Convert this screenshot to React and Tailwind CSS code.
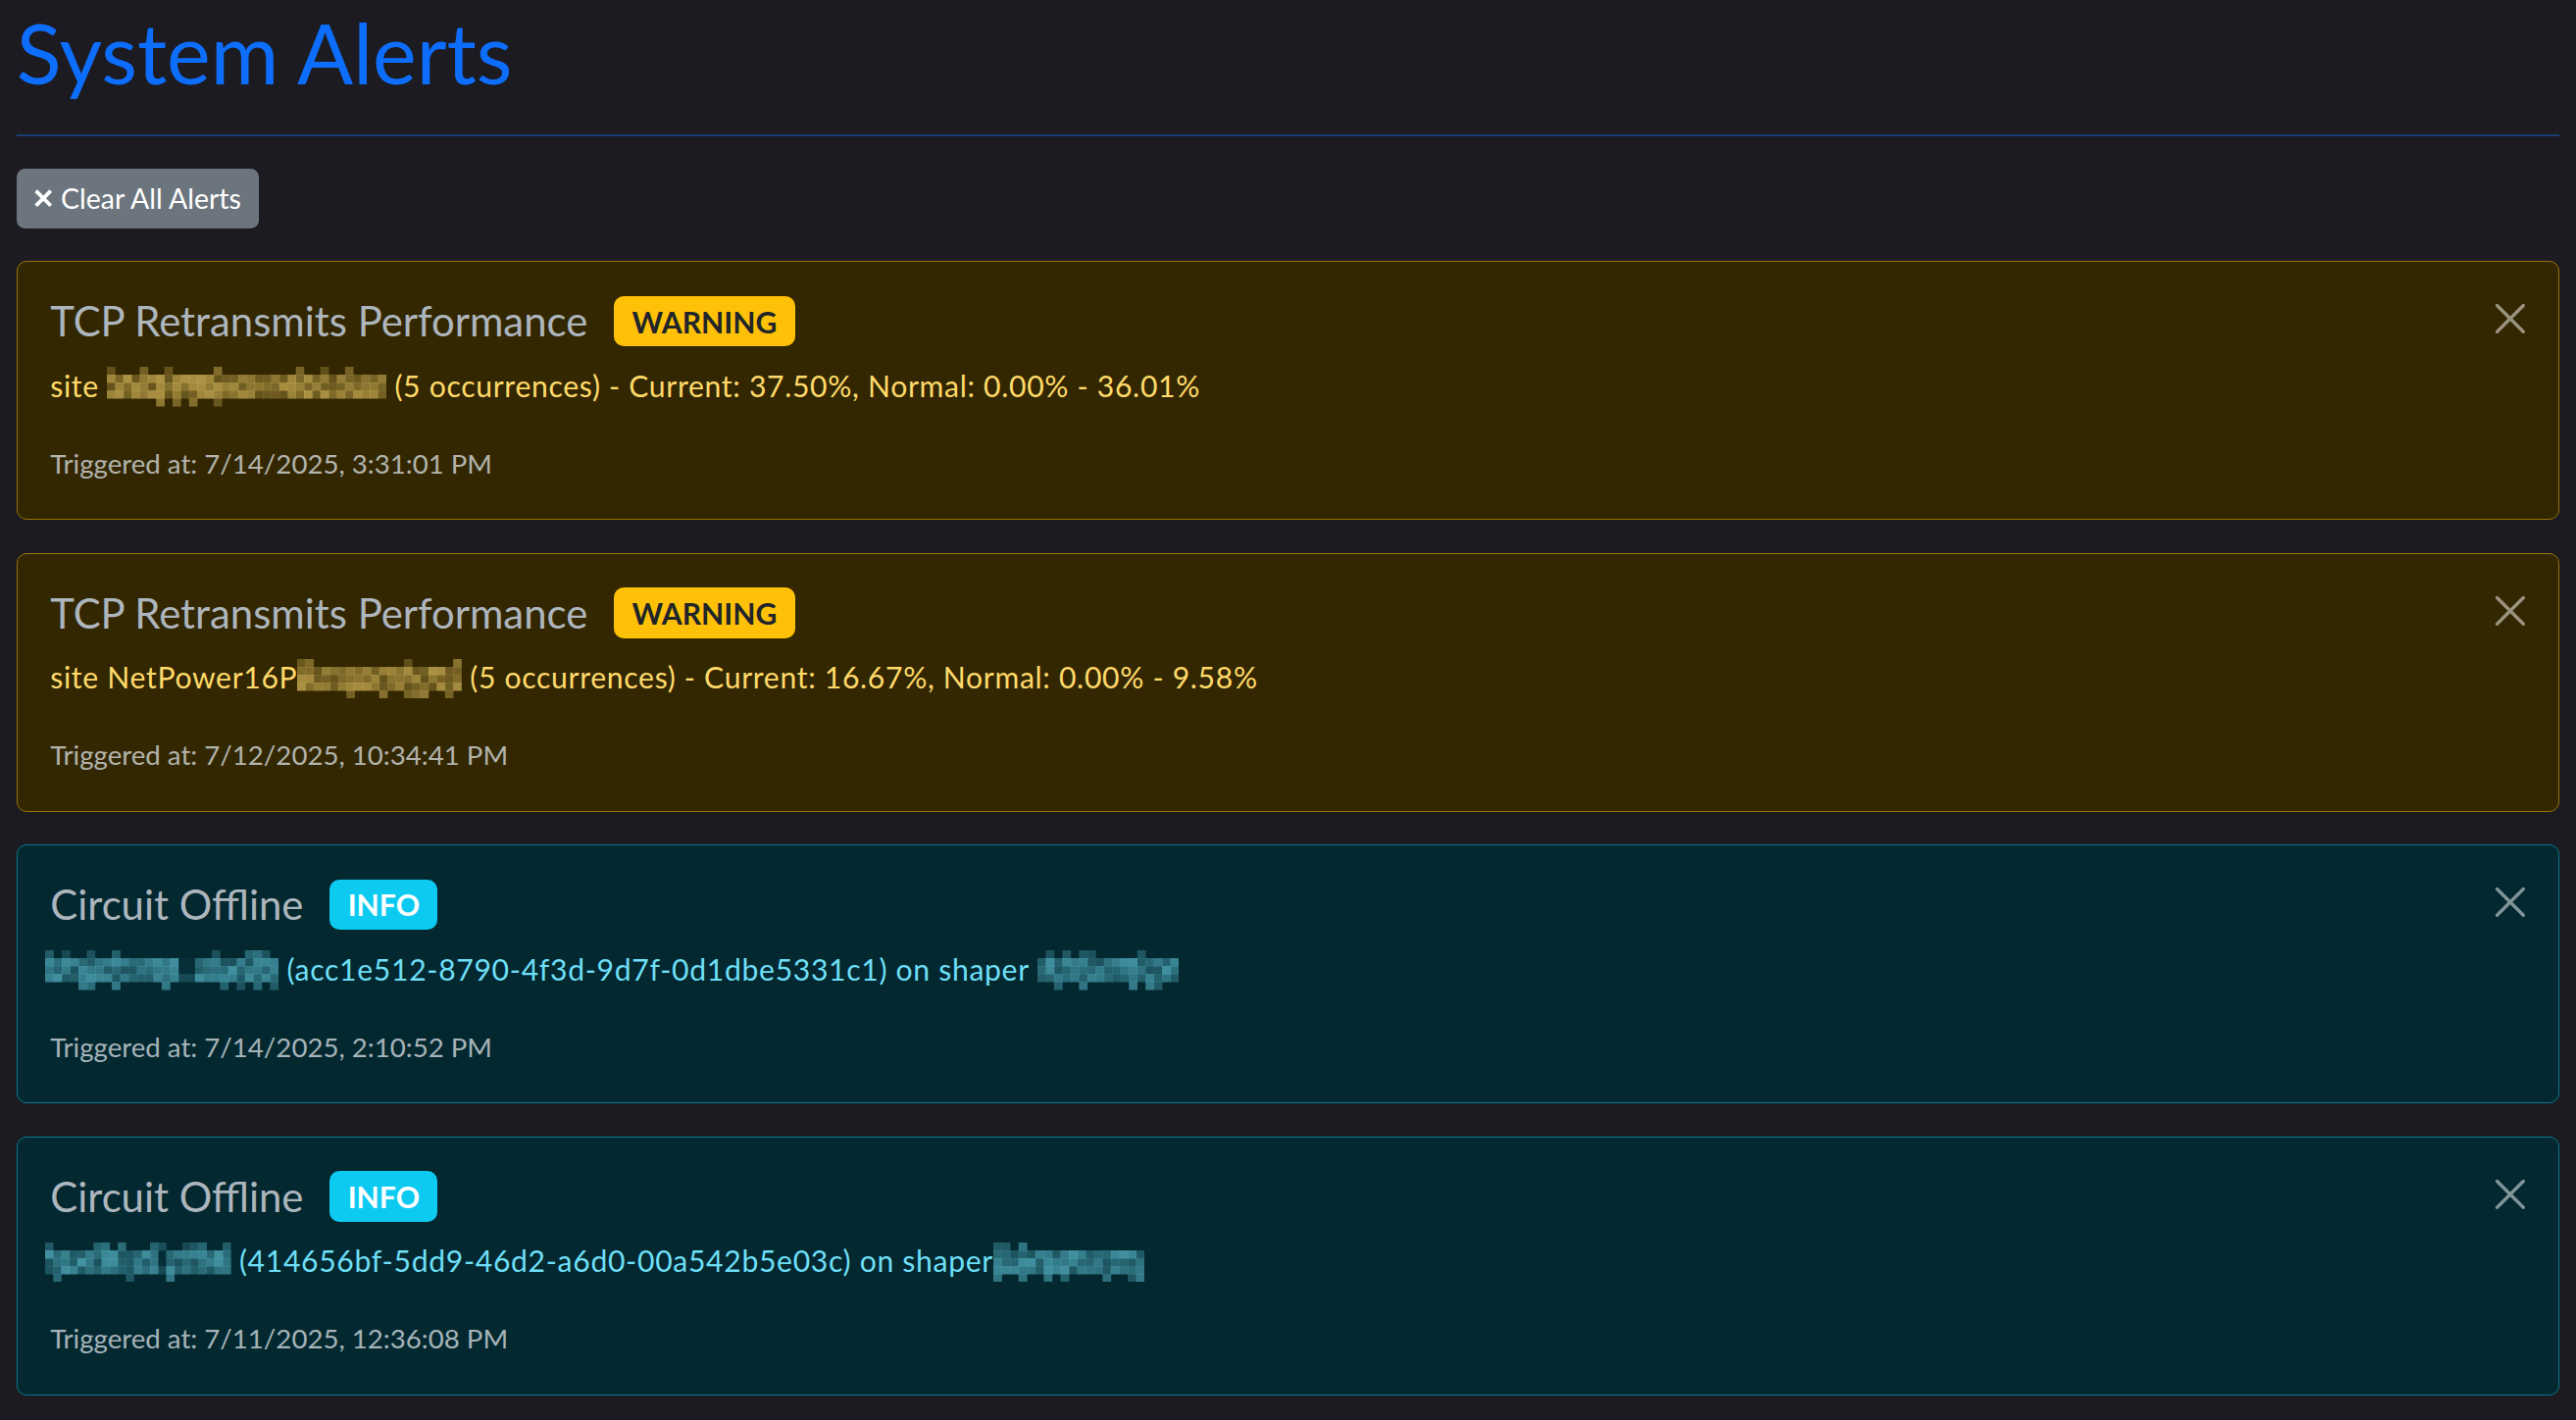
const alerts = [
  {
    id: 1,
    title: 'TCP Retransmits Performance',
    level: 'warning',
    parts: [
      { text: 'site ' },
      { mosaic: 170, seed: 11, gaps: [] },
      { text: ' (5 occurrences) - Current: 37.50%, Normal: 0.00% - 36.01%' },
    ],
    time: '7/14/2025, 3:31:01 PM',
  },
  {
    id: 2,
    title: 'TCP Retransmits Performance',
    level: 'warning',
    parts: [
      { text: 'site NetPower16P' },
      { mosaic: 100, seed: 23, gaps: [] },
      { text: ' (5 occurrences) - Current: 16.67%, Normal: 0.00% - 9.58%' },
    ],
    time: '7/12/2025, 10:34:41 PM',
  },
  {
    id: 3,
    title: 'Circuit Offline',
    level: 'info',
    parts: [
      { mosaic: 142, seed: 37, gaps: [16, 17], shift: true },
      { text: ' (acc1e512-8790-4f3d-9d7f-0d1dbe5331c1) on shaper ' },
      { mosaic: 86, seed: 41, gaps: [] },
    ],
    time: '7/14/2025, 2:10:52 PM',
  },
  {
    id: 4,
    title: 'Circuit Offline',
    level: 'info',
    parts: [
      { mosaic: 113, seed: 53, gaps: [14], shift: true },
      { text: ' (414656bf-5dd9-46d2-a6d0-00a542b5e03c) on shaper' },
      { mosaic: 92, seed: 67, gaps: [] },
    ],
    time: '7/11/2025, 12:36:08 PM',
  },
]

const styles = {
  warning: {
    card: 'border-[#997404] bg-[#332701]',
    text: 'text-[#ffda6a]',
    badge: 'bg-[#ffc107] text-[#212529]',
    label: 'WARNING',
    ink: '#f2d06a',
  },
  info: {
    card: 'border-[#087990] bg-[#032830]',
    text: 'text-[#6edff6]',
    badge: 'bg-[#0dcaf0] text-white',
    label: 'INFO',
    ink: '#66cfe4',
  },
}

function rng(seed) {
  let s = seed * 9301 + 49297
  return () => {
    s = (s * 16807) % 2147483647
    return s / 2147483647
  }
}

// pixelated redaction, like the blocks in the screenshot
function Mosaic({ width, color, seed, gaps, shift }) {
  const rand = rng(seed)
  const cols = Math.round(width / 5)
  const cw = width / cols
  const rh = 4.8
  const cells = []
  for (let c = 0; c < cols; c++) {
    const gap = gaps.includes(c)
    for (let r = 0; r < 5; r++) {
      let a = 0
      if (r === 0) a = rand() < 0.3 ? 0.2 + rand() * 0.25 : 0
      else if (r === 4) a = rand() < 0.18 ? 0.25 + rand() * 0.25 : 0
      else a = gap ? (r === 3 ? 0.2 : 0.04) : 0.25 + rand() * 0.38
      if (a > 0) {
        cells.push(
          <rect
            key={`${c}-${r}`}
            x={c * cw}
            y={r * rh}
            width={cw + 0.2}
            height={rh + 0.2}
            fill={color}
            fillOpacity={a}
          />,
        )
      }
    }
  }
  return (
    <svg
      width={width}
      height={24}
      aria-hidden="true"
      className={`relative top-[1px] inline-block align-top ${shift ? '-ml-[3px]' : ''}`}
    >
      {cells}
    </svg>
  )
}

function CloseIcon() {
  return (
    <svg
      viewBox="0 0 19 19"
      className="h-[19px] w-[19px]"
      fill="none"
      stroke="currentColor"
      strokeWidth="2"
      strokeLinecap="round"
    >
      <path d="M1.5 1.5l16 16M17.5 1.5l-16 16" />
    </svg>
  )
}

function AlertCard({ alert }) {
  const s = styles[alert.level]
  return (
    <div className={`relative rounded-md border px-5 pt-[21px] pb-[23.4px] ${s.card}`}>
      <div className="flex h-[30px] items-center gap-4">
        <h4 className="text-[25px] leading-[1.2] text-[#adb5bd]">{alert.title}</h4>
        <span
          className={`rounded-md px-[11px] py-[6.3px] text-[18px] font-bold leading-none ${s.badge}`}
        >
          {s.label}
        </span>
      </div>
      <p className={`mt-3 text-[18px] leading-6 tracking-[0.4px] ${s.text}`}>
        {alert.parts.map((p, i) =>
          p.mosaic ? (
            <Mosaic
              key={i}
              width={p.mosaic}
              color={s.ink}
              seed={p.seed}
              gaps={p.gaps}
              shift={p.shift}
            />
          ) : (
            <span key={i} className="whitespace-pre">
              {p.text}
            </span>
          ),
        )}
      </p>
      <p className="mt-[25px] text-[16.5px] leading-[21px] text-[rgba(222,226,230,0.75)]">
        Triggered at: {alert.time}
      </p>
      <button type="button" className="absolute top-[25px] right-5 text-white/50">
        <CloseIcon />
      </button>
    </div>
  )
}

export default function App() {
  return (
    <div className="min-h-screen bg-[#1c1b21]">
      <div className="px-[10px] font-['Lato',sans-serif] text-[#dee2e6] [zoom:1.675]">
        <h1 className="border-b-[1.2px] border-[#173d74] pt-[2px] pb-[19px] text-[50.5px] leading-[1.2] text-[#0d6efd]">
          System Alerts
        </h1>
        <button
          type="button"
          className="mt-[20.2px] flex h-9 items-center gap-[5px] rounded-[5px] bg-[#6c757d] pr-[11px] pl-[11px] text-[17px] text-white"
        >
          <svg viewBox="0 0 11 11" className="h-[11px] w-[11px]" fill="none" stroke="currentColor" strokeWidth="2.3">
            <path d="M1 1l9 9M10 1l-9 9" />
          </svg>
          Clear All Alerts
        </button>
        <div className="mt-5 flex flex-col gap-5">
          {alerts.map((a) => (
            <AlertCard key={a.id} alert={a} />
          ))}
        </div>
      </div>
    </div>
  )
}
